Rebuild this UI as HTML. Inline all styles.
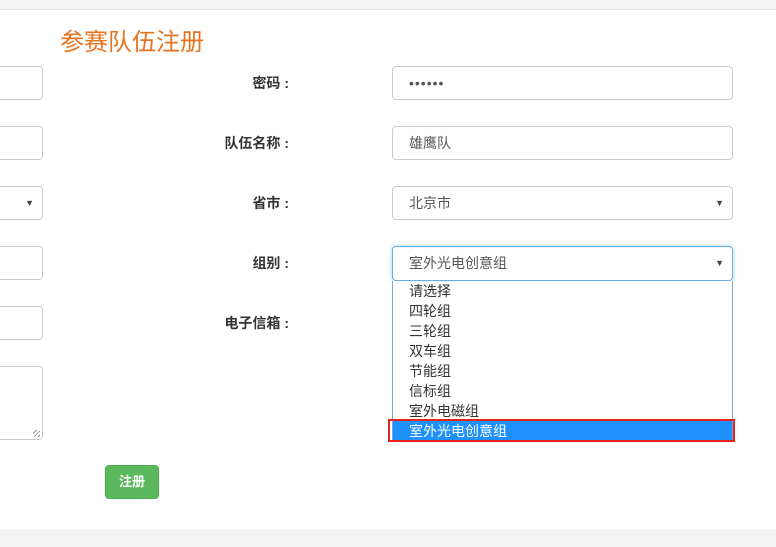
<!DOCTYPE html>
<html><head><meta charset="utf-8"><style>
*{box-sizing:border-box;margin:0;padding:0}
body{width:776px;height:547px;background:#f3f3f3;position:relative;overflow:hidden;font-family:"Liberation Sans","Noto Sans CJK SC",sans-serif;font-size:14px;color:#333}
.main{position:absolute;left:0;top:9px;width:776px;height:520px;background:#fff;border-top:1px solid #e6e6e6}
.a{position:absolute}
h1{position:absolute;left:60px;top:27px;font-size:24px;font-weight:normal;color:#e8731e;line-height:32px}
.in{position:absolute;border:1px solid #ccc;border-radius:4px;background:#fff;height:34px}
.lb{position:absolute;right:487px;width:200px;text-align:right;font-weight:bold;font-size:14px;line-height:34px;color:#333}
.v{padding-left:16px;line-height:32px;font-size:14px;color:#555}
.ar{position:absolute;right:8px;top:0;font-size:9px;line-height:32px;color:#444}
.dd{position:absolute;left:392px;top:281px;width:341px;height:160px;border:1px solid #7aa7d8;border-top:none;background:#fff}
.dd div{height:20px;line-height:21px;padding-left:16px;font-size:14px;color:#333}
</style></head><body>
<div class="main"></div>
<h1>参赛队伍注册</h1>
<div class="in" style="left:-10px;top:66px;width:53px"></div>
<div class="in" style="left:-10px;top:126px;width:53px"></div>
<div class="in" style="left:-10px;top:186px;width:53px"><span class="ar">▼</span></div>
<div class="in" style="left:-10px;top:246px;width:53px"></div>
<div class="in" style="left:-10px;top:306px;width:53px"></div>
<div class="in" style="left:-10px;top:366px;width:53px;height:74px"><span class="a" style="right:2px;bottom:2px;width:7px;height:7px;background:repeating-linear-gradient(135deg,transparent 0 2px,#888 2px 3px)"></span></div>
<div class="lb" style="top:66px">密码 :</div>
<div class="lb" style="top:126px">队伍名称 :</div>
<div class="lb" style="top:186px">省市 :</div>
<div class="lb" style="top:246px">组别 :</div>
<div class="lb" style="top:306px">电子信箱 :</div>
<div class="in v" style="left:392px;top:66px;width:341px;letter-spacing:1px">••••••</div>
<div class="in v" style="left:392px;top:126px;width:341px">雄鹰队</div>
<div class="in v" style="left:392px;top:186px;width:341px">北京市<span class="ar">▼</span></div>
<div class="in v" style="left:392px;top:246px;width:341px;height:35px;border-color:#66afe9;box-shadow:0 0 4px rgba(102,175,233,.6)">室外光电创意组<span class="ar">▼</span></div>
<div class="dd"><div>请选择</div><div>四轮组</div><div>三轮组</div><div>双车组</div><div>节能组</div><div>信标组</div><div>室外电磁组</div><div style="background:#1e90ff;color:#fff">室外光电创意组</div></div>
<div class="a" style="left:388px;top:419px;width:347px;height:23px;border:2px solid #e8231c"></div>
<div class="a" style="left:105px;top:465px;width:54px;height:34px;background:#5cb85c;border:1px solid #4cae4c;border-radius:4px;color:#fff;font-weight:bold;font-size:13px;line-height:32px;text-align:center">注册</div>
</body></html>
